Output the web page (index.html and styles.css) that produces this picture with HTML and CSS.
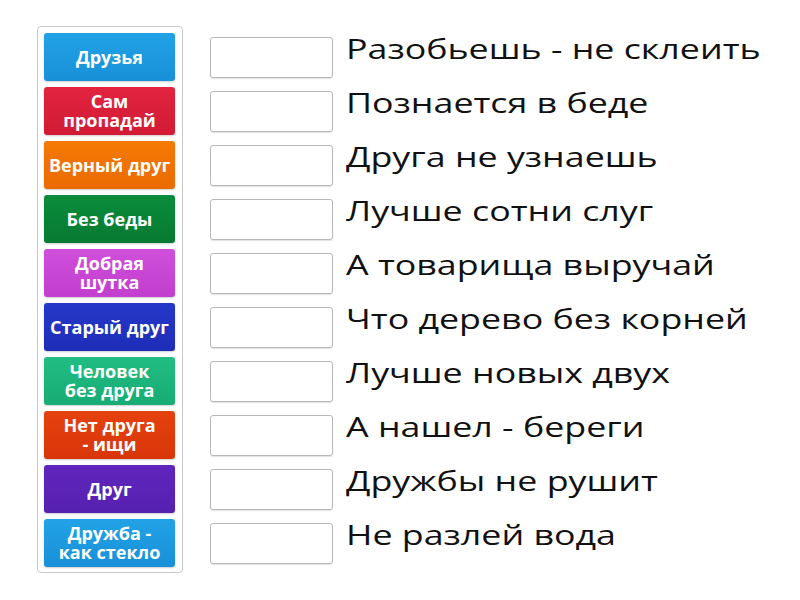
FILE: index.html
```html
<!DOCTYPE html>
<html lang="ru">
<head>
    <meta charset="UTF-8">
    <title>Пословицы о дружбе</title>
    <link rel="stylesheet" href="styles.css">
</head>
<body>
    <div class="board">
        <div class="tiles">
            <div class="tile blue">Друзья</div>
            <div class="tile red">Сам пропадай</div>
            <div class="tile orange">Верный друг</div>
            <div class="tile green">Без беды</div>
            <div class="tile pink">Добрая шутка</div>
            <div class="tile navy">Старый друг</div>
            <div class="tile teal tight">Человек без друга</div>
            <div class="tile rust tight">Нет друга - ищи</div>
            <div class="tile violet">Друг</div>
            <div class="tile blue snug">Дружба - как стекло</div>
        </div>

        <div class="answers">
            <div class="row"><span class="slot"></span><span class="phrase">Разобьешь - не склеить</span></div>
            <div class="row"><span class="slot"></span><span class="phrase">Познается в беде</span></div>
            <div class="row"><span class="slot"></span><span class="phrase">Друга не узнаешь</span></div>
            <div class="row"><span class="slot"></span><span class="phrase">Лучше сотни слуг</span></div>
            <div class="row"><span class="slot"></span><span class="phrase">А товарища выручай</span></div>
            <div class="row"><span class="slot"></span><span class="phrase">Что дерево без корней</span></div>
            <div class="row"><span class="slot"></span><span class="phrase">Лучше новых двух</span></div>
            <div class="row"><span class="slot"></span><span class="phrase">А нашел - береги</span></div>
            <div class="row"><span class="slot"></span><span class="phrase">Дружбы не рушит</span></div>
            <div class="row"><span class="slot"></span><span class="phrase">Не разлей вода</span></div>
        </div>
    </div>
</body>
</html>
```

FILE: styles.css
```css
body {
    margin: 0;
    background-color: #ffffff;
    font-family: 'Open Sans', 'Noto Sans', sans-serif;
}
.board {
    display: flex;
    align-items: flex-start;
    padding: 26px 0 0 37px;
}
.tiles {
    display: flex;
    flex-direction: column;
    gap: 6px;
    width: 131px;
    padding: 6px 7px 5px 6px;
    border: 1px solid #c8c8c8;
    border-radius: 4px;
}
.tile {
    height: 48px;
    display: flex;
    align-items: center;
    justify-content: center;
    text-align: center;
    color: #ffffff;
    font-weight: 700;
    font-size: 18px;
    line-height: 19px;
    border-radius: 3px;
    padding: 0 3px;
    box-shadow: 0 1px 2px rgba(0,0,0,0.2);
}
/* narrower text area so the label wraps like the original */
.tile.tight {
    padding: 0 17px;
}
.tile.snug {
    padding: 0 12px;
}
.blue { background: linear-gradient(#22a2e6, #1890d8); }
.red { background: linear-gradient(#e2243f, #d21a35); }
.orange { background: linear-gradient(#f57a05, #ea6a00); }
.green { background: linear-gradient(#0b8c3c, #067a31); }
.pink { background: linear-gradient(#cf4fdb, #c23ecd); }
.navy { background: linear-gradient(#2638c9, #1d2db8); }
.teal { background: linear-gradient(#22bd82, #17ac74); }
.rust { background: linear-gradient(#e5420f, #d8350a); }
.violet { background: linear-gradient(#6126bd, #5520b0); }
.answers {
    display: flex;
    flex-direction: column;
    gap: 6px;
    margin: 7px 0 0 27px;
}
.row {
    height: 48px;
    display: flex;
    align-items: center;
    gap: 13px;
}
.slot {
    width: 121px;
    height: 39px;
    border: 1px solid #b8b8b8;
    border-radius: 3px;
    box-shadow: 0 1px 1px rgba(0,0,0,0.12);
}
/* phrases are drawn stretched wide in the original */
.phrase {
    align-self: flex-start;
    font-size: 27px;
    line-height: 32px;
    color: #111111;
    white-space: nowrap;
    transform: scaleX(1.325);
    transform-origin: left center;
}
```
